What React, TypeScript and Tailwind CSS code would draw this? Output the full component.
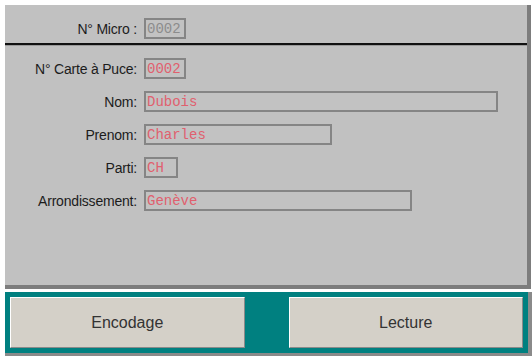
import React from "react";

const rows: { label: string; value: string; w: string }[] = [
  { label: "N° Carte à Puce:", value: "0002", w: "w-[42px]" },
  { label: "Nom:", value: "Dubois", w: "w-[354px]" },
  { label: "Prenom:", value: "Charles", w: "w-[188px]" },
  { label: "Parti:", value: "CH", w: "w-[34px]" },
  { label: "Arrondissement:", value: "Genève", w: "w-[268px]" },
];

function Field({ value, w, muted }: { value: string; w: string; muted?: boolean }) {
  return (
    <div
      className={`${w} h-[21px] border-2 border-[#858585] bg-[#c2c2c2] flex items-center pl-[1px] text-[14px] leading-none ${
        muted ? "text-[#8c8c8c]" : "text-[#e0606e]"
      }`}
      style={{ fontFamily: '"Liberation Mono", "Courier New", monospace' }}
    >
      {value}
    </div>
  );
}

function Label({ text }: { text: string }) {
  return (
    <div className="w-[132px] text-right text-[14px] tracking-[-0.2px] text-[#1c1c1c] leading-none">{text}</div>
  );
}

export default function App() {
  return (
    <div
      className="w-[532px] h-[356px] bg-white flex flex-col overflow-hidden"
      style={{ fontFamily: '"Liberation Sans", Arial, sans-serif' }}
    >
      <div className="ml-[5px] mt-[5px] w-[526px] h-[284px] bg-[#c1c1c1] border-r-4 border-b-4 border-[#7d7d7d] flex flex-col">
        <div className="h-[38px] pt-[13px] flex items-start">
          <div className="flex items-center gap-[7px]">
            <Label text="N° Micro :" />
            <Field value="0002" w="w-[42px]" muted />
          </div>
        </div>
        <div className="h-[2px] bg-[#111]" />
        <div className="h-px bg-[#9a9a9a]" />
        <div className="pt-[12px] flex flex-col gap-[12px]">
          {rows.map((r) => (
            <div key={r.label} className="flex items-center gap-[7px]">
              <Label text={r.label} />
              <Field value={r.value} w={r.w} />
            </div>
          ))}
        </div>
      </div>
      <div className="h-[3px]" />
      <div className="ml-[5px] w-[527px] h-[64px] border-r-4 border-b-[3px] border-[#8a8a8a] bg-[#008080] p-[5px] flex gap-[44px]">
        <button className="flex-1 h-full bg-[#d4d0c8] border border-t-white border-l-white border-r-[#8a8a8a] border-b-[#8a8a8a] text-[16px] text-[#333]">
          Encodage
        </button>
        <button className="flex-1 h-full bg-[#d4d0c8] border border-t-white border-l-white border-r-[#8a8a8a] border-b-[#8a8a8a] text-[16px] text-[#333]">
          Lecture
        </button>
      </div>
    </div>
  );
}
